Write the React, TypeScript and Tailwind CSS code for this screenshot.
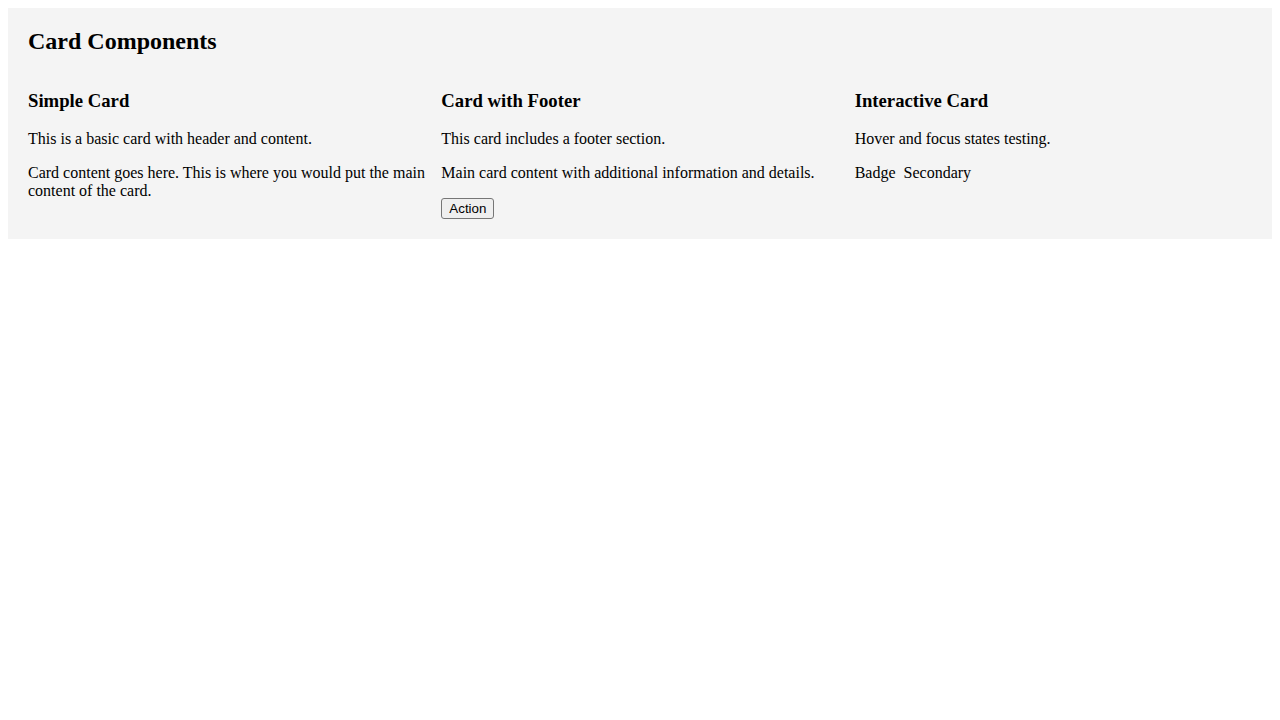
import {FC, ReactNode} from 'react';

const Card: FC<{title: string; subtitle: string; children: ReactNode}> = ({title, subtitle, children}) => (
  <div>
    <h3 className="mt-[18.72px] mb-[18px] text-[18.72px] font-bold">{title}</h3>
    <p className="mb-4">{subtitle}</p>
    {children}
  </div>
);

export default function App() {
  return (
    <div className="m-2 bg-[#f4f4f4] p-5 font-['Liberation_Serif',serif] text-base leading-[normal] text-black">
      <h2 className="mb-4 text-2xl leading-[normal] font-bold">Card Components</h2>
      <div className="grid grid-cols-3 gap-4">
        <Card title="Simple Card" subtitle="This is a basic card with header and content.">
          <p>Card content goes here. This is where you would put the main content of the card.</p>
        </Card>
        <Card title="Card with Footer" subtitle="This card includes a footer section.">
          <p className="mb-4">Main card content with additional information and details.</p>
          <div>
            <button
              type="button"
              className="rounded-[3px] border border-[#767676] bg-[#efefef] px-[7px] py-[2px] font-['Liberation_Sans',Arial,sans-serif] text-[13.33px] leading-[normal] text-black">
              Action
            </button>
          </div>
        </Card>
        <Card title="Interactive Card" subtitle="Hover and focus states testing.">
          <div className="flex gap-2">
            <span>Badge</span>
            <span>Secondary</span>
          </div>
        </Card>
      </div>
    </div>
  );
}
